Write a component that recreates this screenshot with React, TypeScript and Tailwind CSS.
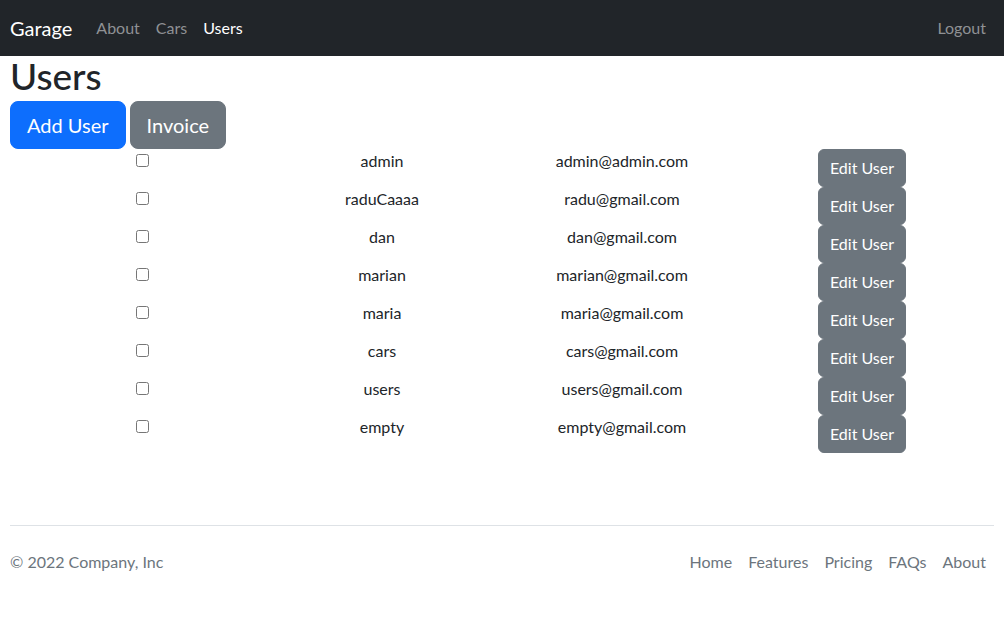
import React from "react";

const users = [
  ["admin", "admin@admin.com"],
  ["raduCaaaa", "radu@gmail.com"],
  ["dan", "dan@gmail.com"],
  ["marian", "marian@gmail.com"],
  ["maria", "maria@gmail.com"],
  ["cars", "cars@gmail.com"],
  ["users", "users@gmail.com"],
  ["empty", "empty@gmail.com"],
];

export default function App() {
  return (
    <div
      className="min-h-[631px] bg-white text-[#212529] text-base leading-6"
      style={{ fontFamily: '"Segoe UI", Lato, "Noto Sans", sans-serif' }}
    >
      <nav className="h-14 bg-[#212529] px-[10px] flex items-center justify-between">
        <div className="flex items-center">
          <span className="text-white text-[20px] leading-[30px] mr-4">Garage</span>
          <a className="px-2 py-2 text-[#8f9194]">About</a>
          <a className="px-2 py-2 text-[#8f9194]">Cars</a>
          <a className="px-2 py-2 text-white">Users</a>
        </div>
        <a className="px-2 py-2 text-[#8f9194]">Logout</a>
      </nav>
      <div className="px-[10px]">
        <h1 className="text-[37px] leading-[39px] pb-[6px] font-medium">Users</h1>
        <div className="flex gap-1">
          <button className="bg-[#0d6efd] text-white text-[20px] leading-[30px] px-4 py-2 rounded-lg border border-[#0d6efd]">
            Add User
          </button>
          <button className="bg-[#6c757d] text-white text-[20px] leading-[30px] px-4 py-2 rounded-lg border border-[#6c757d]">
            Invoice
          </button>
        </div>
        <div className="ml-[12px] w-[960px] grid grid-cols-4 text-center">
          {users.map(([name, email]) => (
            <React.Fragment key={name}>
              <div className="flex justify-center items-start">
                <input type="checkbox" className="mt-[5px] w-[13px] h-[13px]" />
              </div>
              <div>{name}</div>
              <div>{email}</div>
              <div className="flex justify-center">
                <button className="bg-[#6c757d] text-white px-[11px] py-[6px] rounded-md border border-[#6c757d] leading-6">
                  Edit User
                </button>
              </div>
            </React.Fragment>
          ))}
        </div>
        <footer className="mt-[72px] border-t border-[#dee2e6] py-4 flex items-center justify-between text-[#6c757d]">
          <span>© 2022 Company, Inc</span>
          <div className="flex">
            <a className="px-2 py-2">Home</a>
            <a className="px-2 py-2">Features</a>
            <a className="px-2 py-2">Pricing</a>
            <a className="px-2 py-2">FAQs</a>
            <a className="px-2 py-2">About</a>
          </div>
        </footer>
      </div>
    </div>
  );
}
